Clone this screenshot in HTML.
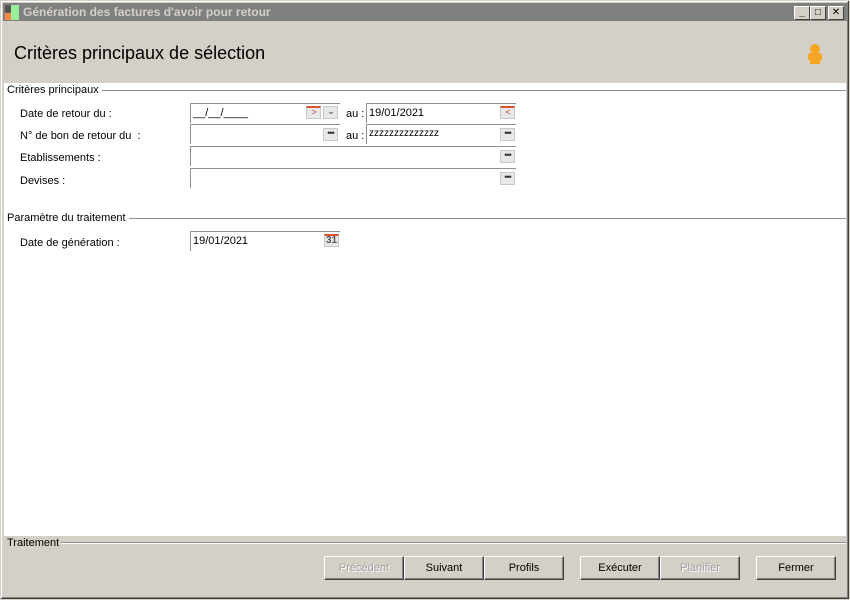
<!DOCTYPE html>
<html><head><meta charset="utf-8"><style>
*{margin:0;padding:0;box-sizing:border-box}
body{width:850px;height:600px;background:#d4d0c8;font-family:"Liberation Sans","DejaVu Sans",sans-serif;font-size:11px;color:#000;position:relative;overflow:hidden}
.a{position:absolute}
.win{left:0;top:0;width:850px;height:600px;border:1px solid #d4d0c8;box-shadow:inset -1px -1px 0 #404040,inset 1px 1px 0 #fff,inset -2px -2px 0 #808080}
.title{left:3px;top:3px;width:844px;height:18px;background:#808080;color:#d4d0c8;font-weight:bold;font-size:12px;line-height:18px;padding-left:20px}
.tb{top:6px;width:16px;height:14px;background:#d4d0c8;border:1px solid;border-color:#fff #404040 #404040 #fff;font-size:10px;text-align:center;line-height:12px;font-weight:bold}
.panel{left:4px;top:83px;width:842px;height:453px;background:#fff}
.lbl{font-size:11px}
.in{background:#fff;border-top:1px solid #909090;border-left:1px solid #909090;height:20px;padding:1px 0 0 2px;font-size:11px;line-height:16px}
.btnd{width:15px;height:13px;background:#e8e8e8;border:1px solid #c8c8c8;font-size:9px;line-height:9px;text-align:center;color:#333;letter-spacing:-1px}
.sec{height:1px;background:#909090}
.b{top:556px;width:80px;height:24px;background:#d4d0c8;border:1px solid;border-color:#fff #404040 #404040 #fff;box-shadow:inset -1px -1px 0 #808080;text-align:center;line-height:23px;font-size:11px}
.dis{color:#a0a0a0;text-shadow:1px 1px 0 #fff}
</style></head><body>
<div class="a win"></div>
<div class="a title">Génération des factures d'avoir pour retour</div>
<div class="a" style="left:5px;top:5px;width:6px;height:8px;background:#555"></div>
<div class="a" style="left:11px;top:5px;width:8px;height:15px;background:#9e9"></div>
<div class="a" style="left:5px;top:13px;width:6px;height:7px;background:#f84"></div>
<div class="a tb" style="left:794px">_</div>
<div class="a tb" style="left:810px">□</div>
<div class="a tb" style="left:828px">✕</div>
<div class="a" style="left:14px;top:43px;font-size:18px">Critères principaux de sélection</div>
<svg class="a" style="left:806px;top:43px" width="18" height="22"><circle cx="9" cy="6" r="5" fill="#f5a623"/><path d="M2 13 Q2 10 5 10 L13 10 Q16 10 16 13 L16 17 L14 17 L14 21 L4 21 L4 17 L2 17Z" fill="#f5a623"/></svg>
<div class="a panel"></div>
<div class="a lbl" style="left:7px;top:84px;background:#fff;padding-right:3px;z-index:2">Critères principaux</div>
<div class="a sec" style="left:60px;top:90px;width:786px"></div>
<div class="a lbl" style="left:20px;top:108px">Date de retour du :</div>
<div class="a lbl" style="left:20px;top:130px">N° de bon de retour du&nbsp; :</div>
<div class="a lbl" style="left:20px;top:152px">Etablissements :</div>
<div class="a lbl" style="left:20px;top:175px">Devises :</div>
<div class="a in" style="left:190px;top:103px;width:150px">__/__/____</div>
<div class="a btnd" style="left:306px;top:106px;color:#c44;border-top:2px solid #e05030">&gt;</div>
<div class="a btnd" style="left:323px;top:106px">⌄</div>
<div class="a lbl" style="left:346px;top:108px">au :</div>
<div class="a in" style="left:366px;top:103px;width:150px">19/01/2021</div>
<div class="a btnd" style="left:500px;top:106px;color:#c44;border-top:2px solid #e05030">&lt;</div>
<div class="a in" style="left:190px;top:124px;width:150px"></div>
<div class="a btnd" style="left:323px;top:128px">•••</div>
<div class="a lbl" style="left:346px;top:130px">au :</div>
<div class="a in" style="left:366px;top:124px;width:150px;font-size:10px">zzzzzzzzzzzzzz</div>
<div class="a btnd" style="left:500px;top:128px">•••</div>
<div class="a in" style="left:190px;top:146px;width:326px"></div>
<div class="a btnd" style="left:500px;top:150px">•••</div>
<div class="a in" style="left:190px;top:168px;width:326px"></div>
<div class="a btnd" style="left:500px;top:172px">•••</div>
<div class="a lbl" style="left:7px;top:212px;background:#fff;padding-right:3px;z-index:2">Paramètre du traitement</div>
<div class="a sec" style="left:100px;top:218px;width:746px"></div>
<div class="a lbl" style="left:20px;top:237px">Date de génération :</div>
<div class="a in" style="left:190px;top:231px;width:150px">19/01/2021</div>
<div class="a btnd" style="left:324px;top:234px;border-top:2px solid #e05030;font-weight:bold;color:#555;font-size:10px;letter-spacing:0">31</div>
<div class="a lbl" style="left:7px;top:537px;background:#d4d0c8;padding-right:2px;z-index:2">Traitement</div>
<div class="a sec" style="left:50px;top:542px;width:796px;background:#909090;box-shadow:0 1px 0 #fff"></div>
<div class="a b dis" style="left:324px">Précédent</div>
<div class="a b" style="left:404px">Suivant</div>
<div class="a b" style="left:484px">Profils</div>
<div class="a b" style="left:580px">Exécuter</div>
<div class="a b dis" style="left:660px">Planifier</div>
<div class="a b" style="left:756px">Fermer</div>
</body></html>
